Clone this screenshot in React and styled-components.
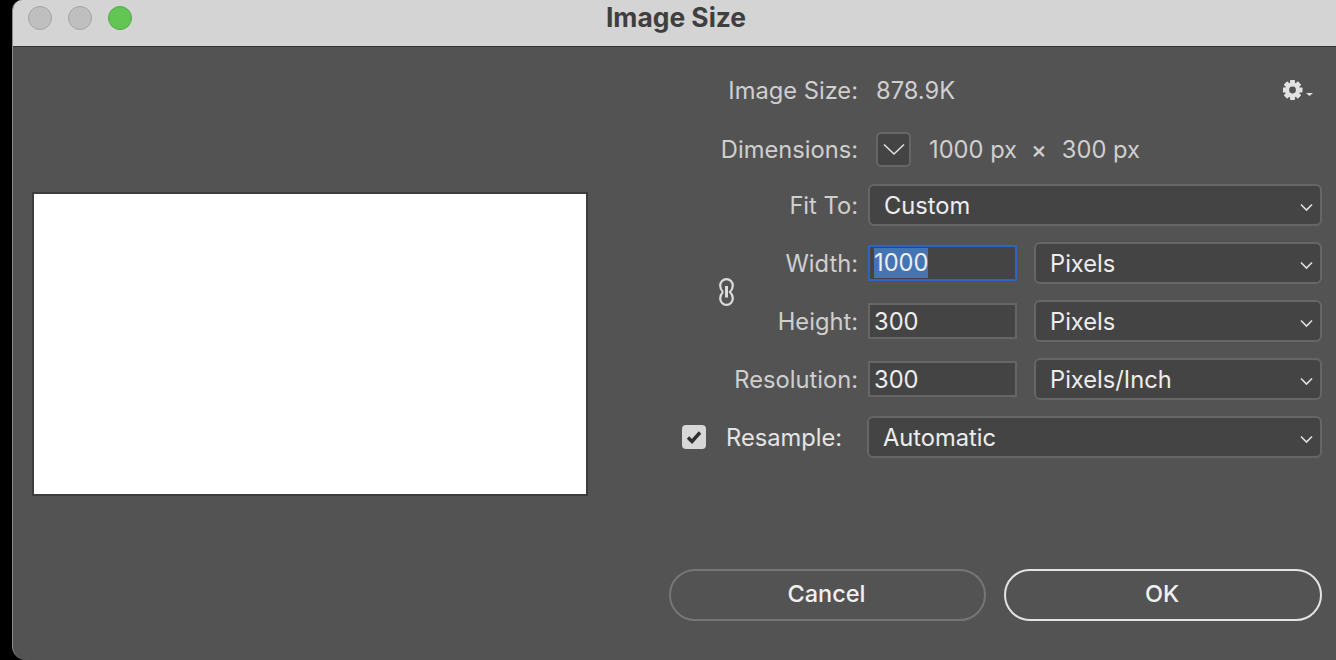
import React from "react";
import styled, { createGlobalStyle } from "styled-components";

const Global = createGlobalStyle`
  html, body { margin: 0; padding: 0; background: #000; overflow: hidden; }
  body { font-family: Inter, "Liberation Sans", sans-serif; }
`;

const Window = styled.div`
  margin-left: 12px;
  width: 1324px;
  height: 660px;
  box-sizing: border-box;
  background: #535353;
  border-left: 1px solid #8a8a8a;
  border-radius: 10px 0 0 14px;
  overflow: hidden;
  display: flex;
  flex-direction: column;
`;

const TitleBar = styled.header`
  height: 47px;
  box-sizing: border-box;
  flex: none;
  background: #d4d4d4;
  border-bottom: 1px solid #333;
  display: grid;
  grid-template-columns: 1fr auto 1fr;
  align-items: center;
  padding: 0 0 10px 15px;
`;

const Lights = styled.div`
  display: flex;
  gap: 16px;
`;

const Light = styled.span`
  width: 24px;
  height: 24px;
  box-sizing: border-box;
  border-radius: 50%;
  background: ${(p) => (p.$on ? "#62c554" : "#bfbfbf")};
  border: 1px solid ${(p) => (p.$on ? "#52a847" : "#a3a3a3")};
`;

const Title = styled.h1`
  margin: 0 0 2px;
  font-size: 26.4px;
  font-weight: 700;
  color: #3f3f3f;
  transform: translateX(-6px);
`;

const Main = styled.main`
  flex: 1;
  display: flex;
`;

const PreviewPane = styled.section`
  width: 657px;
  flex: none;
  box-sizing: border-box;
  padding: 145px 0 0 19px;
`;

const Preview = styled.div`
  width: 556px;
  height: 304px;
  box-sizing: border-box;
  background: #fff;
  border: 2px solid #3d3d3d;
`;

const Form = styled.section`
  width: 652px;
  flex: none;
  padding-top: 27px;
  display: flex;
  flex-direction: column;
`;

const InfoRow = styled.div`
  display: grid;
  grid-template-columns: 188px 1fr auto;
  align-items: center;
  height: 32px;
  margin-bottom: 26px;
  padding-right: 9px;
`;

const DimsRow = styled.div`
  display: flex;
  align-items: center;
  height: 35px;
  margin-bottom: 17px;
`;

const Label = styled.label`
  text-align: right;
  font-size: 23.7px;
  color: #cfcfcf;
  white-space: nowrap;
`;

const DimsLabel = styled(Label)`
  width: 188px;
  flex: none;
`;

const Value = styled.span`
  font-size: 23.7px;
  color: #cfcfcf;
  margin-left: 18px;
  white-space: nowrap;
`;

const Times = styled(Value)`
  margin-left: 14px;
  margin-right: -3px;
  font-weight: 500;
`;

const DimsToggle = styled.button`
  width: 35px;
  height: 35px;
  margin-left: 18px;
  padding: 0;
  box-sizing: border-box;
  background: #444;
  border: 2px solid #666;
  border-radius: 5px;
  display: flex;
  align-items: center;
  justify-content: center;
`;

const FieldRow = styled.div`
  display: grid;
  grid-template-columns: 188px 10px 149px 17px 288px;
  align-items: center;
  height: 42px;
  margin-bottom: 16px;
`;

const LinkedGroup = styled.div`
  display: grid;
  grid-template-columns: 188px 10px 149px 17px 288px;
  grid-auto-rows: 42px;
  row-gap: 16px;
  align-items: center;
  margin-bottom: 16px;
`;

const LinkMark = styled.span`
  grid-column: 1;
  grid-row: 1 / span 2;
  justify-self: start;
  margin-left: 49px;
  display: flex;
`;

const FieldLabel = styled(Label)`
  grid-column: 1;
  grid-row: ${(p) => p.$row};
`;

const SelectBox = styled.div`
  height: 42px;
  box-sizing: border-box;
  background: #444;
  border: 2px solid #666;
  border-radius: 6px;
  display: flex;
  align-items: center;
  justify-content: space-between;
  padding: 0 7px 0 14px;
  font-size: 23.7px;
  color: #ededed;
  grid-column: ${(p) => p.$col};
  grid-row: ${(p) => p.$row || "auto"};
  svg { margin-top: 4px; }
`;

const InputBox = styled.div`
  height: 36px;
  box-sizing: border-box;
  background: #444;
  border: 2px solid ${(p) => (p.$focus ? "#2c63c4" : "#666")};
  display: flex;
  align-items: center;
  padding-left: 4px;
  font-size: 23.7px;
  color: #ededed;
  grid-column: 3;
  grid-row: ${(p) => p.$row || "auto"};
`;

const Selected = styled.span`
  background: #4574b4;
  line-height: 30px;
  display: inline-block;
`;

const ResampleRow = styled.div`
  display: grid;
  grid-template-columns: 12px 24px 20px 141px 1fr;
  align-items: center;
  height: 42px;
  margin-bottom: 111px;
`;

const Check = styled.span`
  grid-column: 2;
  width: 24px;
  height: 24px;
  background: #d8d8d8;
  border-radius: 4px;
  display: flex;
  align-items: center;
  justify-content: center;
`;

const ResampleLabel = styled.label`
  grid-column: 4;
  font-size: 23.7px;
  color: #e4e4e4;
`;

const Actions = styled.div`
  display: grid;
  grid-template-columns: 317px 318px;
  column-gap: 18px;
  margin-left: -1px;
`;

const Btn = styled.button`
  height: 52px;
  box-sizing: border-box;
  background: transparent;
  border: 2px solid ${(p) => (p.$primary ? "#e4e4e4" : "#767676")};
  border-radius: 26px;
  color: #f0f0f0;
  font-family: inherit;
  font-size: 23.5px;
  font-weight: 450;
  padding: 0 2px 4px 0;
`;

const Chevron = ({ w = 13, h = 7 }) => (
  <svg width={w} height={h + 2} viewBox={`0 0 ${w} ${h + 2}`} fill="none">
    <path d={`M1 1.5 L${w / 2} ${h} L${w - 1} 1.5`} stroke="#e0e0e0" strokeWidth="1.6" />
  </svg>
);

const Gear = () => (
  <svg width="30" height="22" viewBox="0 0 30 22">
    <g fill="#e2e2e2">
      {[0, 45, 90, 135].map((a) => (
        <rect key={a} x="7" y="1" width="5" height="20" rx="0.8" transform={`rotate(${a} 9.5 11)`} />
      ))}
      <path fillRule="evenodd" d="M9.5 3.5a7.5 7.5 0 1 0 0 15a7.5 7.5 0 1 0 0-15zM9.5 7.6a3.4 3.4 0 1 1 0 6.8a3.4 3.4 0 1 1 0-6.8z" />
      <path d="M23 14h7l-3.5 3z" />
    </g>
    <circle cx="9.5" cy="11" r="3.4" fill="#535353" />
  </svg>
);

const LinkIcon = () => (
  <svg width="15" height="28" viewBox="0 0 15 28" fill="none" stroke="#dcdcdc" strokeWidth="2.2">
    <path d="M4 14 C2 12 1.2 10 1.2 7.5 A6.3 6.3 0 0 1 13.8 7.5 C13.8 10 13 12 11 14 C13 16 13.8 18 13.8 20.5 A6.3 6.3 0 0 1 1.2 20.5 C1.2 18 2 16 4 14" />
    <path d="M7.5 8 V19.5" strokeWidth="3" />
  </svg>
);

const CheckMark = () => (
  <svg width="16" height="14" viewBox="0 0 16 14" fill="none">
    <path d="M2 7.5 L6 11.5 L14 2.5" stroke="#2f2f2f" strokeWidth="3.4" />
  </svg>
);

export default function App() {
  return (
    <>
      <Global />
      <Window>
        <TitleBar>
          <Lights>
            <Light />
            <Light />
            <Light $on />
          </Lights>
          <Title>Image Size</Title>
        </TitleBar>
        <Main>
          <PreviewPane>
            <Preview />
          </PreviewPane>
          <Form>
            <InfoRow>
              <Label>Image Size:</Label>
              <Value>878.9K</Value>
              <Gear />
            </InfoRow>
            <DimsRow>
              <DimsLabel>Dimensions:</DimsLabel>
              <DimsToggle>
                <Chevron w={22} h={11} />
              </DimsToggle>
              <Value>1000 px</Value>
              <Times>×</Times>
              <Value>300 px</Value>
            </DimsRow>
            <FieldRow>
              <Label>Fit To:</Label>
              <SelectBox $col="3 / span 3">
                Custom
                <Chevron />
              </SelectBox>
            </FieldRow>
            <LinkedGroup>
              <LinkMark>
                <LinkIcon />
              </LinkMark>
              <FieldLabel $row={1}>Width:</FieldLabel>
              <InputBox $focus $row={1}>
                <Selected>1000</Selected>
              </InputBox>
              <SelectBox $col="5" $row={1}>
                Pixels
                <Chevron />
              </SelectBox>
              <FieldLabel $row={2}>Height:</FieldLabel>
              <InputBox $row={2}>300</InputBox>
              <SelectBox $col="5" $row={2}>
                Pixels
                <Chevron />
              </SelectBox>
            </LinkedGroup>
            <FieldRow>
              <Label>Resolution:</Label>
              <InputBox>300</InputBox>
              <SelectBox $col="5">
                Pixels/Inch
                <Chevron />
              </SelectBox>
            </FieldRow>
            <ResampleRow>
              <Check>
                <CheckMark />
              </Check>
              <ResampleLabel>Resample:</ResampleLabel>
              <SelectBox $col="5">
                Automatic
                <Chevron />
              </SelectBox>
            </ResampleRow>
            <Actions>
              <Btn>Cancel</Btn>
              <Btn $primary>OK</Btn>
            </Actions>
          </Form>
        </Main>
      </Window>
    </>
  );
}
